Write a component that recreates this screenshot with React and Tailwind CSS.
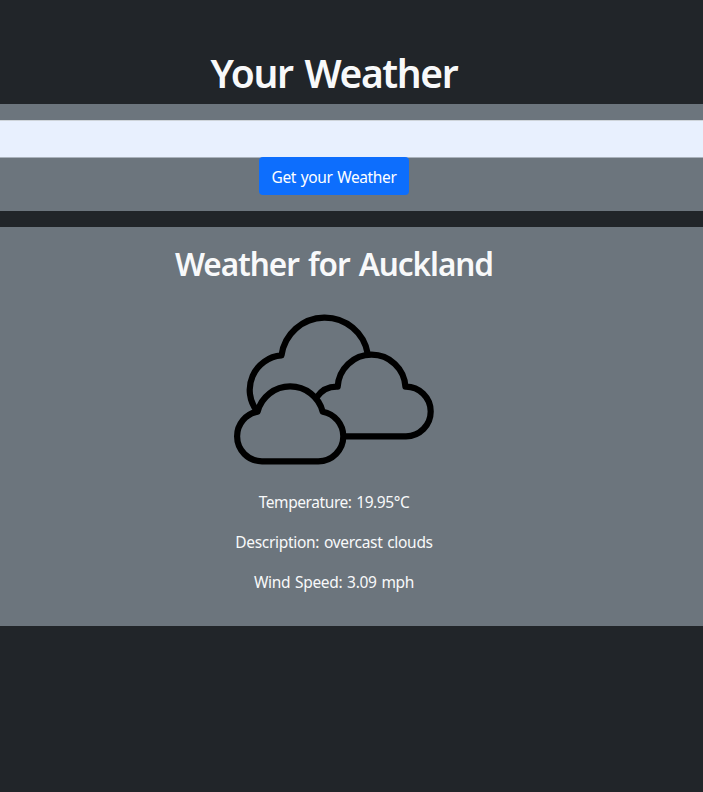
function CloudsIcon() {
  return (
    <svg
      className="block h-[200px] w-[200px]"
      viewBox="234 290 200 200"
      fill="none"
      stroke="#000"
      strokeWidth="6.2"
      strokeLinejoin="round"
    >
      <path d="M257 411A34.5 34.5 0 0 1 281.5 355.4A43.65 43.65 0 0 1 367.8 354" />
      <path d="M316.5 397.5A24.8 24.8 0 0 1 337.7 386.7A33.9 33.9 0 0 1 405.4 386.7A24.9 24.9 0 0 1 430.7 411.5A24.8 24.8 0 0 1 406 436.3H344" />
      <path d="M262 461.3A25 25 0 0 1 237.1 436.3A25 25 0 0 1 257.6 411.7A33.6 33.6 0 0 1 322.7 411.7A25 25 0 0 1 343.3 436.3A25 25 0 0 1 318.3 461.3Z" />
    </svg>
  );
}

export default function App() {
  return (
    <div className="h-[792px] w-[703px] overflow-hidden bg-[#212529] pt-[49px] font-['Noto_Sans','Open_Sans',sans-serif] text-[15.5px] text-[#f8f9fa]">
      <h1 className="mb-[7px] pr-[35px] text-center text-[39px] leading-[48px] font-semibold tracking-[-1.35px] whitespace-nowrap [word-spacing:3px]">
        Your Weather
      </h1>
      <form className="h-[107px] bg-[#6c757d] pt-4" onSubmit={(e) => e.preventDefault()}>
        <input
          type="text"
          aria-label="City"
          className="block h-[38px] w-full border-y border-[#ced4da] border-b-[#aab2bc] bg-[#e8f0fe] px-3 text-[#212529] outline-none"
        />
        <div className="-mt-px flex justify-center pr-[35px]">
          <button className="h-[38px] w-[150px] rounded-[4px] bg-[#0d6efd] pt-[3px] tracking-[-0.37px] whitespace-nowrap text-white [word-spacing:1px]">
            Get your Weather
          </button>
        </div>
      </form>
      <section className="mt-4 flex h-[399px] flex-col items-center bg-[#6c757d] pt-[18px] pr-[35px]">
        <h2 className="text-[31.5px] leading-[38px] font-semibold tracking-[-1.06px] whitespace-nowrap [word-spacing:2px]">
          Weather for Auckland
        </h2>
        <div className="mt-[7px]">
          <CloudsIcon />
        </div>
        <p className="mb-4 leading-6 tracking-[-0.42px] [word-spacing:1px]">Temperature: 19.95°C</p>
        <p className="mb-4 leading-6 tracking-[-0.3px] [word-spacing:1px]">Description: overcast clouds</p>
        <p className="leading-6 tracking-[-0.3px] [word-spacing:1px]">Wind Speed: 3.09 mph</p>
      </section>
    </div>
  );
}
